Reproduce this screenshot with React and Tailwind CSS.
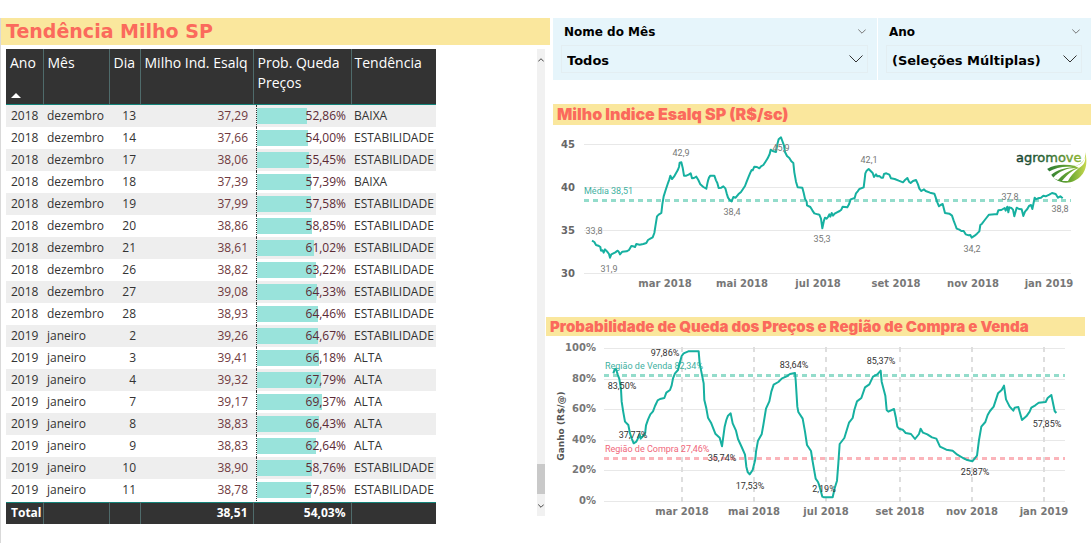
const rows = [
  { ano: 2018, mes: 'dezembro', dia: 13, preco: '37,29', prob: 52.86, tend: 'BAIXA' },
  { ano: 2018, mes: 'dezembro', dia: 14, preco: '37,66', prob: 54.0, tend: 'ESTABILIDADE' },
  { ano: 2018, mes: 'dezembro', dia: 17, preco: '38,06', prob: 55.45, tend: 'ESTABILIDADE' },
  { ano: 2018, mes: 'dezembro', dia: 18, preco: '37,39', prob: 57.39, tend: 'BAIXA' },
  { ano: 2018, mes: 'dezembro', dia: 19, preco: '37,99', prob: 57.58, tend: 'ESTABILIDADE' },
  { ano: 2018, mes: 'dezembro', dia: 20, preco: '38,86', prob: 58.85, tend: 'ESTABILIDADE' },
  { ano: 2018, mes: 'dezembro', dia: 21, preco: '38,61', prob: 61.02, tend: 'ESTABILIDADE' },
  { ano: 2018, mes: 'dezembro', dia: 26, preco: '38,82', prob: 63.22, tend: 'ESTABILIDADE' },
  { ano: 2018, mes: 'dezembro', dia: 27, preco: '39,08', prob: 64.33, tend: 'ESTABILIDADE' },
  { ano: 2018, mes: 'dezembro', dia: 28, preco: '38,93', prob: 64.46, tend: 'ESTABILIDADE' },
  { ano: 2019, mes: 'janeiro', dia: 2, preco: '39,26', prob: 64.67, tend: 'ESTABILIDADE' },
  { ano: 2019, mes: 'janeiro', dia: 3, preco: '39,41', prob: 66.18, tend: 'ALTA' },
  { ano: 2019, mes: 'janeiro', dia: 4, preco: '39,32', prob: 67.79, tend: 'ALTA' },
  { ano: 2019, mes: 'janeiro', dia: 7, preco: '39,17', prob: 69.37, tend: 'ALTA' },
  { ano: 2019, mes: 'janeiro', dia: 8, preco: '38,83', prob: 66.43, tend: 'ALTA' },
  { ano: 2019, mes: 'janeiro', dia: 9, preco: '38,83', prob: 62.64, tend: 'ALTA' },
  { ano: 2019, mes: 'janeiro', dia: 10, preco: '38,90', prob: 58.76, tend: 'ESTABILIDADE' },
  { ano: 2019, mes: 'janeiro', dia: 11, preco: '38,78', prob: 57.85, tend: 'ESTABILIDADE' },
];

// series are drawn on a grid three times finer than the chart
const PRECO =
  '141,347 148,351 153,360 160,362 166,366 168,377 173,376 176,383 180,373 186,379 192,387 195,398 199,388 205,385 211,382 218,377 221,380 225,388 232,380 245,379 252,375 259,363 265,364 270,366 274,357 284,359 295,357 304,354 309,345 316,341 323,337 328,324 331,305 336,274 341,269 349,264 352,238 356,214 362,195 368,177 373,163 376,152 381,162 387,155 392,146 398,136 402,126 404,113 409,112 413,128 417,152 424,152 431,149 437,145 441,160 447,159 454,155 460,165 466,178 475,186 484,191 487,176 489,167 492,158 496,152 508,152 513,166 517,174 521,189 529,188 535,184 541,190 545,205 549,218 555,226 560,229 565,216 572,218 580,208 588,201 594,192 600,183 605,170 611,155 616,143 620,135 623,136 628,125 636,126 643,130 648,124 655,120 661,111 668,100 674,87 677,74 683,78 693,81 697,58 701,43 708,37 712,48 717,62 720,81 726,93 733,99 739,109 745,114 748,142 753,170 758,187 772,188 776,203 780,221 785,230 786,241 796,246 802,256 808,265 818,268 ' +
  '823,269 828,281 832,310 837,286 840,278 845,281 849,276 853,268 856,275 860,264 864,272 869,266 876,262 884,258 889,254 893,245 907,247 912,238 917,223 929,219 933,205 938,199 943,192 956,187 959,163 961,145 965,137 971,132 977,138 983,144 987,156 993,148 997,154 1003,153 1009,158 1014,158 1017,147 1024,145 1033,149 1038,160 1049,162 1061,167 1074,172 1081,164 1087,159 1092,170 1097,174 1104,168 1113,165 1119,178 1123,191 1129,198 1137,193 1142,198 1155,203 1168,206 1171,214 1177,232 1182,244 1187,240 1193,237 1200,264 1213,266 1221,272 1226,287 1231,300 1235,311 1243,314 1249,318 1256,318 1262,328 1271,331 1276,330 1280,338 1289,332 1296,326 1303,319 1306,300 1311,296 1317,288 1324,279 1332,269 1349,268 1356,268 1360,256 1369,255 1379,249 1382,257 1387,245 1390,262 1393,247 1399,249 1404,254 1408,274 1415,248 1422,252 1430,253 1435,273 1440,260 1447,252 1452,243 1458,240 1462,252 1465,238 1469,218 1473,223 1479,220 1488,218 1495,212 1502,214 1513,209 1521,204 1532,207 1539,218 1546,214 1553,220';

const PROB =
  '205,190 209,178 213,177 218,193 223,207 228,238 230,275 235,307 240,335 250,345 255,370 260,385 266,400 274,395 280,383 284,372 287,386 293,379 300,373 303,346 309,329 316,313 324,304 330,288 338,271 345,267 358,264 364,248 375,240 380,226 384,205 390,190 399,180 404,160 410,138 416,130 430,124 461,124 464,160 470,190 476,220 478,270 484,295 489,323 498,338 511,371 524,383 531,409 539,350 544,330 549,317 557,310 563,340 573,362 579,387 590,411 600,434 604,470 608,486 614,493 623,480 631,448 633,425 639,392 650,373 655,345 663,296 673,274 679,245 686,224 700,216 711,205 725,199 735,192 750,189 752,210 757,290 760,306 773,326 780,365 786,405 798,423 803,455 812,506 ' +
  '819,516 823,527 828,545 832,560 837,562 863,562 869,535 876,512 880,460 884,402 898,384 912,338 923,324 928,300 936,274 949,264 960,232 973,223 984,200 997,193 1007,182 1010,215 1021,257 1025,300 1030,305 1047,297 1052,320 1057,350 1062,356 1073,359 1082,369 1098,372 1110,387 1122,372 1127,356 1134,368 1147,373 1161,382 1174,386 1185,410 1204,419 1223,422 1237,434 1254,444 1264,449 1282,454 1296,437 1302,390 1309,350 1321,336 1328,315 1335,303 1346,290 1359,250 1370,240 1377,227 1383,268 1394,290 1405,302 1409,293 1420,291 1431,330 1444,319 1454,305 1459,293 1471,286 1481,278 1502,276 1508,264 1519,255 1529,303 1534,309';

const precoTicks = [
  { label: '45', y: 19 },
  { label: '40', y: 62 },
  { label: '35', y: 105 },
  { label: '30', y: 148 },
];
const precoMonths = [
  { label: 'mar 2018', x: 120 },
  { label: 'mai 2018', x: 197 },
  { label: 'jul 2018', x: 273 },
  { label: 'set 2018', x: 351 },
  { label: 'nov 2018', x: 428 },
  { label: 'jan 2019', x: 504 },
];
const precoLabels = [
  { label: '33,8', x: 49, y: 109 },
  { label: '31,9', x: 64, y: 147 },
  { label: '42,9', x: 136, y: 31 },
  { label: '38,4', x: 187, y: 90 },
  { label: '45,9', x: 236, y: 26 },
  { label: '35,3', x: 277, y: 117 },
  { label: '42,1', x: 324, y: 38 },
  { label: '34,2', x: 427, y: 127 },
  { label: '37,8', x: 465, y: 75 },
  { label: '38,8', x: 515, y: 87 },
];

const probTicks = [
  { label: '100%', y: 12 },
  { label: '80%', y: 43 },
  { label: '60%', y: 73 },
  { label: '40%', y: 104 },
  { label: '20%', y: 134 },
  { label: '0%', y: 165 },
];
const probMonths = [
  { label: 'mar 2018', x: 137 },
  { label: 'mai 2018', x: 209 },
  { label: 'jul 2018', x: 281 },
  { label: 'set 2018', x: 355 },
  { label: 'nov 2018', x: 427 },
  { label: 'jan 2019', x: 499 },
];
const probLabels = [
  { label: '83,50%', x: 77, y: 53 },
  { label: '37,77%', x: 88, y: 102 },
  { label: '97,86%', x: 120, y: 20 },
  { label: '35,74%', x: 177, y: 125 },
  { label: '17,53%', x: 205, y: 153 },
  { label: '83,64%', x: 249, y: 32 },
  { label: '2,19%', x: 279, y: 156 },
  { label: '85,37%', x: 336, y: 28 },
  { label: '25,87%', x: 430, y: 139 },
  { label: '57,85%', x: 502, y: 91 },
];

function formatPct(n) {
  return `${n.toFixed(2).replace('.', ',')}%`;
}

function Chevron({ className }) {
  return (
    <svg viewBox="0 0 14 8" className={className} fill="none" stroke="currentColor" aria-hidden="true">
      <path d="M0.5 0.5 L7 7 L13.5 0.5" vectorEffect="non-scaling-stroke" />
    </svg>
  );
}

function TrendTable() {
  const th = 'border-r border-[#4f6b6b] px-1 pt-1 align-top font-normal';
  return (
    <table className="h-[475px] w-[430px] table-fixed border-collapse font-['Open_Sans','Noto_Sans',sans-serif] text-[12px] leading-4 text-[#333]">
      <colgroup>
        <col className="w-[37px]" />
        <col className="w-[66px]" />
        <col className="w-[31px]" />
        <col className="w-[113px]" />
        <col className="w-[98px]" />
        <col className="w-[85px]" />
      </colgroup>
      <thead className="border-b border-[#14847a] bg-[#333] text-left text-[14px] leading-5 text-white">
        <tr className="h-[55px]">
          <th className={th}>
            Ano
            <svg viewBox="0 0 10 5" className="mt-5 ml-px h-[5px] w-[10px] fill-white" aria-hidden="true">
              <path d="M5 0 L10 5 H0Z" />
            </svg>
          </th>
          <th className={th}>Mês</th>
          <th className={th}>Dia</th>
          <th className={`${th} whitespace-nowrap`}>Milho Ind. Esalq</th>
          <th className={th}>Prob. Queda Preços</th>
          <th className="px-[3px] pt-1 align-top font-normal">Tendência</th>
        </tr>
      </thead>
      <tbody>
        {rows.map(r => (
          <tr key={`${r.ano}-${r.mes}-${r.dia}`} className="h-[22px] odd:bg-[#eee]">
            <td className="pl-[5px]">{r.ano}</td>
            <td className="pl-1">{r.mes}</td>
            <td className="pr-1 text-right">{r.dia}</td>
            <td className="pr-[5px] text-right text-[#703a40]">{r.preco}</td>
            <td className="pl-[3px]">
              <div className="relative flex h-[22px] items-center justify-end border-l border-dotted border-[#333] pr-[5px] text-[#5c2a35]">
                <div
                  className="absolute left-0 h-4 bg-[#99e3db]"
                  style={{ width: `${r.prob}%` }}
                />
                <span className="relative">{formatPct(r.prob)}</span>
              </div>
            </td>
            <td className="pl-[3px]">{r.tend}</td>
          </tr>
        ))}
      </tbody>
      <tfoot className="border-t border-[#14847a] bg-[#333] font-bold text-white">
        <tr className="h-[22px]">
          <td className="border-r border-[#4f6b6b] pl-[5px]">Total</td>
          <td className="border-r border-[#4f6b6b]" />
          <td className="border-r border-[#4f6b6b]" />
          <td className="border-r border-[#4f6b6b] pr-[5px] text-right">38,51</td>
          <td className="border-r border-[#4f6b6b] pr-[5px] text-right">54,03%</td>
          <td />
        </tr>
      </tfoot>
    </table>
  );
}

function Scrollbar() {
  return (
    <div className="flex h-[467px] w-2 flex-col items-center justify-between bg-[#f1f1f1] pt-[9px] pb-2">
      <Chevron className="h-1 w-1.5 rotate-180 text-[#444]" />
      <div className="flex w-full flex-col items-center gap-[10px]">
        <div className="h-[30px] w-full bg-[#c9c9c9]" />
        <Chevron className="h-1 w-1.5 text-[#444]" />
      </div>
    </div>
  );
}

function Slicer({ id, label, value }) {
  return (
    <div className="bg-[#e6f5fb] pr-[9px] pb-[7px] pl-2 font-['DejaVu_Sans',sans-serif] font-bold text-black">
      <div className="flex h-[27px] items-center justify-between pr-[2px] pl-[3px]">
        <label htmlFor={id} className="text-[12px] leading-5">{label}</label>
        <button type="button" aria-label={`Expandir ${label}`}>
          <Chevron className="h-[5px] w-2 text-[#777]" />
        </button>
      </div>
      <div className="relative border border-[#e3eef2]">
        <select id={id} className="block h-[26px] w-full appearance-none bg-transparent pt-1 pl-[5px] text-[13px] leading-5">
          <option>{value}</option>
        </select>
        <Chevron className="pointer-events-none absolute top-[9px] right-1 h-2 w-[14px] text-[#333]" />
      </div>
    </div>
  );
}

function Logo() {
  return (
    <svg viewBox="0 0 74 34" className="absolute top-[25px] right-[3px] h-[34px] w-[74px]" role="img" aria-label="agromove">
      <defs>
        <linearGradient id="logo-text" x1="0" x2="1">
          <stop offset="0" stopColor="#173f2c" />
          <stop offset="0.5" stopColor="#2f6a35" />
          <stop offset="1" stopColor="#8fb92f" />
        </linearGradient>
        <linearGradient id="logo-leaf" x1="0" x2="1">
          <stop offset="0" stopColor="#2b7a35" />
          <stop offset="0.6" stopColor="#6ba832" />
          <stop offset="1" stopColor="#c9d94f" />
        </linearGradient>
      </defs>
      <text x="2" y="12" fill="url(#logo-text)" stroke="url(#logo-text)" strokeWidth="0.4" className="font-['DejaVu_Sans',sans-serif] text-[13px]">
        agromove
      </text>
      <path d="M71 2 C74 12 73 25 60 31 C55 33 48 34 41 29 C37 26 35 20 33 19 C41 14 51 14 62 16 C69 13 72 9 71 2Z" fill="url(#logo-leaf)" />
      <path d="M71 6 C70 12 67 15 61 16 L65 18 C70 15 72 11 71 6Z" fill="#fff" />
      <path d="M34 22 C42 17 51 16 59 17 C50 18 43 20 37 25Z M39 28 C45 21 53 18 62 18 C54 21 48 25 44 30Z M48 31 C53 25 58 20 65 18 C60 22 56 27 54 31Z" fill="#fff" />
    </svg>
  );
}

function PriceChart() {
  return (
    <svg viewBox="0 0 546 190" className="block w-full" role="img" aria-label="Milho Indice Esalq SP">
      {precoTicks.map(t => (
        <g key={t.label}>
          <line x1="39" x2="526" y1={t.y + 0.5} y2={t.y + 0.5} stroke="#e8e8e8" />
          <text x="30" y={t.y + 4} textAnchor="end" className="fill-[#666] font-['DejaVu_Sans',sans-serif] text-[10px] font-bold">
            {t.label}
          </text>
        </g>
      ))}
      <line x1="39" x2="526" y1="75.5" y2="75.5" stroke="#93dccb" strokeWidth="3" strokeDasharray="5 4" />
      <text x="39" y="69" className="fill-[#3fb19f] font-['Roboto',sans-serif] text-[9px]">
        Média 38,51
      </text>
      <svg width="546" height="190" viewBox="0 0 1638 570">
        <polyline points={PRECO} fill="none" stroke="#16b0a0" strokeWidth="6" strokeLinejoin="round" />
      </svg>
      {precoLabels.map(l => (
        <text key={l.label} x={l.x} y={l.y} textAnchor="middle" className="fill-[#777] font-['Roboto',sans-serif] text-[9px]">
          {l.label}
        </text>
      ))}
      {precoMonths.map(m => (
        <text key={m.label} x={m.x} y="162" textAnchor="middle" className="fill-[#777] font-['DejaVu_Sans',sans-serif] text-[10px] font-bold">
          {m.label}
        </text>
      ))}
    </svg>
  );
}

function ProbChart() {
  return (
    <svg viewBox="0 0 546 207" className="block w-full" role="img" aria-label="Probabilidade de queda dos preços">
      {probTicks.map(t => (
        <g key={t.label}>
          <line x1="59" x2="520" y1={t.y + 0.5} y2={t.y + 0.5} stroke="#e8e8e8" />
          <text x="51" y={t.y + 3} textAnchor="end" className="fill-[#777] font-['DejaVu_Sans',sans-serif] text-[10px] font-bold">
            {t.label}
          </text>
        </g>
      ))}
      {probMonths.map(m => (
        <g key={m.label}>
          <line x1={m.x} x2={m.x} y1="11" y2="166" stroke="#dedede" strokeWidth="2" strokeDasharray="5 5" />
          <text x={m.x} y="179" textAnchor="middle" className="fill-[#777] font-['DejaVu_Sans',sans-serif] text-[10px] font-bold">
            {m.label}
          </text>
        </g>
      ))}
      <text x="-90" y="19" transform="rotate(-90)" textAnchor="middle" className="fill-[#555] font-['DejaVu_Sans',sans-serif] text-[9px] font-bold">
        Ganho (R$/@)
      </text>
      <line x1="59" x2="520" y1="39.5" y2="39.5" stroke="#93dccb" strokeWidth="3" strokeDasharray="5 4" />
      <line x1="59" x2="520" y1="122.5" y2="122.5" stroke="#fbb4ba" strokeWidth="3" strokeDasharray="5 4" />
      <text x="60" y="33" className="fill-[#3fb19f] font-['Roboto',sans-serif] text-[9px]">
        Região de Venda 82,34%
      </text>
      <text x="60" y="116" className="fill-[#f0677a] font-['Roboto',sans-serif] text-[9px]">
        Região de Compra 27,46%
      </text>
      <svg width="546" height="207" viewBox="0 78 1638 621">
        <polyline points={PROB} fill="none" stroke="#16b0a0" strokeWidth="6" strokeLinejoin="round" />
      </svg>
      {probLabels.map(l => (
        <text key={l.label} x={l.x} y={l.y} textAnchor="middle" className="fill-[#333] font-['Roboto',sans-serif] text-[9px]">
          {l.label}
        </text>
      ))}
    </svg>
  );
}

export default function App() {
  return (
    <div className="grid grid-cols-[545fr_546fr] bg-white pt-[18px]">
      <section className="border-l border-[#d9d9d9]">
        <h1 className="-mr-[5px] bg-[#fae79d] pl-[5px] font-['DejaVu_Sans',sans-serif] text-[19px] leading-[27px] font-bold text-[#fb6a5c]">
          Tendência Milho SP
        </h1>
        <div className="mt-1 flex justify-between pl-[5px]">
          <TrendTable />
          <Scrollbar />
        </div>
      </section>

      <section>
        <div className="grid grid-cols-[324fr_213fr] gap-px pl-2">
          <Slicer id="mes" label="Nome do Mês" value="Todos" />
          <Slicer id="ano" label="Ano" value="(Seleções Múltiplas)" />
        </div>
        <div className="mt-6">
          <h2 className="ml-2 bg-[#fae79d] pl-1 font-['Inter','Liberation_Sans',sans-serif] text-[16px] leading-[21px] font-black text-[#fb6a5c]">
            Milho Indice Esalq SP (R$/sc)
          </h2>
          <div className="relative">
            <PriceChart />
            <Logo />
          </div>
        </div>
        <h2 className="mt-[2px] mr-[6px] ml-px bg-[#fae79d] pl-1 font-['Inter','Liberation_Sans',sans-serif] text-[15px] leading-[19px] font-black text-[#fb6a5c]">
          Probabilidade de Queda dos Preços e Região de Compra e Venda
        </h2>
        <ProbChart />
      </section>
    </div>
  );
}
